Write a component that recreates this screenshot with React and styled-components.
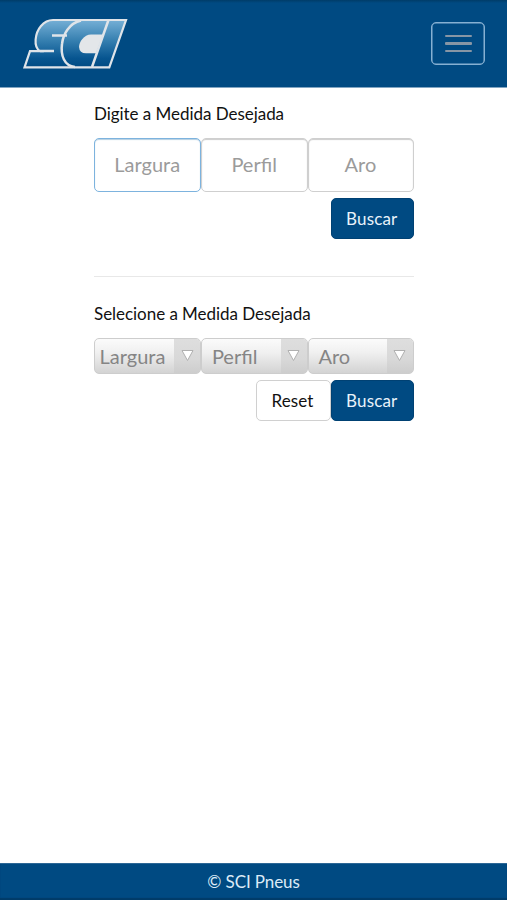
import React from "react";
import styled, { createGlobalStyle } from "styled-components";

const GlobalStyle = createGlobalStyle`
  *, *::before, *::after { box-sizing: border-box; }
  body { margin: 0; background: #fff; }
  button, input { font: inherit; margin: 0; }
`;

const Page = styled.div`
  display: flex;
  flex-direction: column;
  height: 900px;
  font-family: Lato, sans-serif;
  font-size: 17px;
  color: #111;
`;

const Header = styled.header`
  display: flex;
  justify-content: space-between;
  align-items: flex-start;
  flex: none;
  height: 88px;
  padding: 18px 22px 0;
  background: linear-gradient(#003c68 0, #004a82 3px);
  border-bottom: 1px solid #81a5c2;
`;

const Logo = styled.svg`
  display: block;
  width: 106px;
  height: 52px;
`;

const MenuButton = styled.button`
  display: flex;
  flex-direction: column;
  align-items: center;
  justify-content: center;
  gap: 5px;
  width: 54px;
  height: 43px;
  margin-top: 4px;
  padding: 0;
  background: transparent;
  border: 1px solid #86b0d2;
  box-shadow: inset 0 0 0 0.5px #86b0d2;
  border-radius: 5px;
`;

const MenuBar = styled.span`
  width: 27px;
  height: 2.5px;
  border-radius: 1px;
  background: #8796a5;
`;

const Main = styled.main`
  flex: 1;
  width: 320px;
  margin-left: 94px;
`;

const Heading = styled.h2`
  margin: 0;
  padding-top: ${(p) => p.$top}px;
  font-size: 17px;
  font-weight: 400;
  line-height: 20px;
  letter-spacing: -0.04px;
  white-space: nowrap;
`;

const Fields = styled.div`
  display: grid;
  grid-template-columns: 107.4px 106.5px 106.1px;
  margin-top: ${(p) => p.$top}px;
`;

const MeasureInput = styled.input`
  width: 100%;
  min-width: 0;
  height: 53.5px;
  padding: 0 1px 1px 0;
  border: 1px solid ${(p) => (p.$active ? "#7db3de" : "#cfcfcf")};
  border-radius: 5px;
  background: #fff;
  box-shadow: inset 0 1px 1px ${(p) => (p.$active ? "#b4cfe2" : "#cccccc")};
  font-size: 20px;
  text-align: center;
  outline: none;
  &::placeholder { color: #9b9b9b; opacity: 1; }
`;

const SelectBox = styled.button`
  display: flex;
  justify-content: space-between;
  align-items: stretch;
  height: 35.5px;
  padding: 0 0 0 ${(p) => p.$indent}px;
  overflow: hidden;
  border: 1px solid #cdcdcd;
  border-radius: 5px;
  background: linear-gradient(#fbfbfb, #f0f0f0 40%, #d3d3d3);
  color: #858585;
  font-size: 20px;
  line-height: 35px;
  text-align: left;
`;

const SelectArrow = styled.span`
  display: flex;
  align-items: center;
  justify-content: center;
  width: 26px;
  background: linear-gradient(#dedede, #d8d8d8 60%, #cdcdcd);
`;

const Actions = styled.div`
  display: flex;
  justify-content: flex-end;
  margin-top: 6px;
`;

const Button = styled.button`
  width: ${(p) => (p.$primary ? 83.5 : 75)}px;
  height: 41.5px;
  padding: 0 1px 0 0;
  border: 1px solid ${(p) => (p.$primary ? "#004173" : "#d0d0d0")};
  border-radius: 5px;
  background: ${(p) => (p.$primary ? "#004a82" : "#fff")};
  color: ${(p) => (p.$primary ? "#e8f2fa" : "#111")};
  font-size: 17px;
  letter-spacing: 0.15px;
`;

const Divider = styled.hr`
  height: 1px;
  margin: 37px 0 0;
  border: 0;
  background: #e8e8e8;
`;

const Footer = styled.footer`
  flex: none;
  height: 37px;
  background: #004a82;
  border-top: 1px solid #2c6796;
  box-shadow: inset 0 -2px 1px #003b68;
  color: #dcebf7;
  font-size: 17px;
  line-height: 36px;
  letter-spacing: -0.1px;
  text-align: center;
`;

function Select({ label, indent }) {
  return (
    <SelectBox type="button" $indent={indent}>
      {label}
      <SelectArrow>
        <svg width="13" height="13" viewBox="0 0 13 13">
          <path d="M1 1.5H12L6.5 11.5Z" fill="#fff" stroke="#b0b0b0" />
        </svg>
      </SelectArrow>
    </SelectBox>
  );
}

function BrandLogo() {
  return (
    <Logo viewBox="22 18 106 52" role="img" aria-label="SCI">
      <defs>
        <linearGradient id="brandBlue" gradientUnits="userSpaceOnUse" x1="0" y1="19" x2="0" y2="68">
          <stop offset="0" stopColor="#79b2d8" />
          <stop offset="0.45" stopColor="#347eaf" />
          <stop offset="0.8" stopColor="#075590" />
          <stop offset="1" stopColor="#004a82" />
        </linearGradient>
      </defs>
      <path
        d="M53 20H126L109.300 67.300H24.500L30 51.100H40C33 47 35 33 41 26Q46 20 53 20Z"
        fill="url(#brandBlue)"
        stroke="#dfe4e9"
        strokeWidth="2.200"
      />
      <path
        d="M103 34.500H91C84 34.500 79 42 79 47Q79.500 53.300 86 53.300H96Z"
        fill="#e3e6e9"
      />
      <path
        d="M40 51.100H54M67 35.600H52M81 20.500C69 23 63 35 62 44C60.500 55 64 66 75 67M108.300 20.500L92 67"
        fill="none"
        stroke="#dfe4e9"
        strokeWidth="2.500"
      />
    </Logo>
  );
}

export default function App() {
  return (
    <Page>
      <GlobalStyle />
      <Header>
        <BrandLogo />
        <MenuButton type="button" aria-label="Menu">
          <MenuBar />
          <MenuBar />
          <MenuBar />
        </MenuButton>
      </Header>
      <Main>
        <Heading $top={16}>Digite a Medida Desejada</Heading>
        <Fields $top={14}>
          <MeasureInput placeholder="Largura" $active />
          <MeasureInput placeholder="Perfil" />
          <MeasureInput placeholder="Aro" />
        </Fields>
        <Actions>
          <Button $primary>Buscar</Button>
        </Actions>
        <Divider />
        <Heading $top={27}>Selecione a Medida Desejada</Heading>
        <Fields $top={14}>
          <Select label="Largura" indent={4.5} />
          <Select label="Perfil" indent={9.5} />
          <Select label="Aro" indent={9.5} />
        </Fields>
        <Actions>
          <Button>Reset</Button>
          <Button $primary>Buscar</Button>
        </Actions>
      </Main>
      <Footer>© SCI Pneus</Footer>
    </Page>
  );
}
